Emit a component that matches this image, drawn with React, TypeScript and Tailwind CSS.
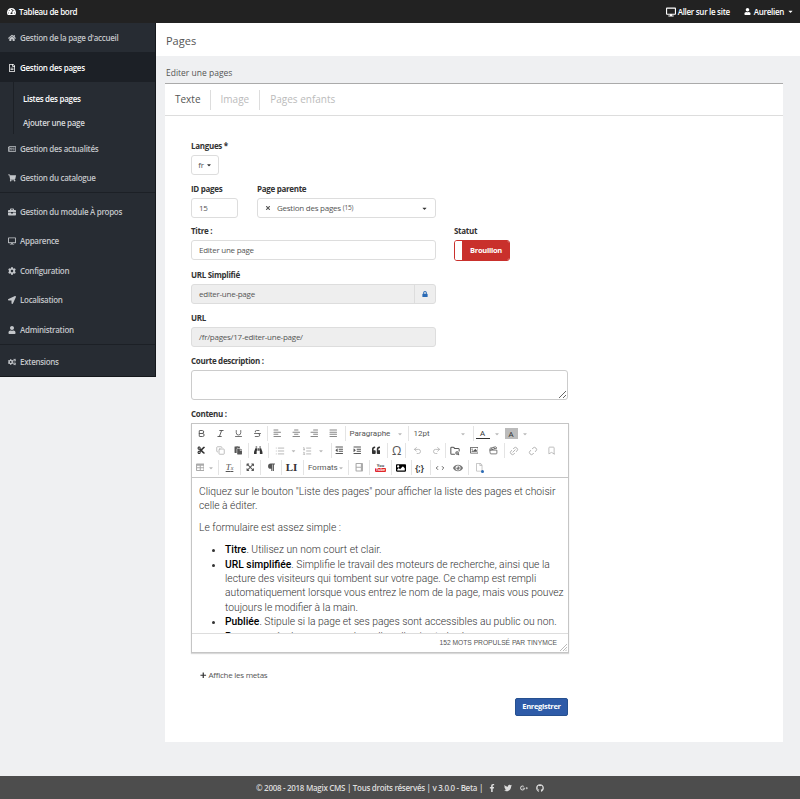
import type { ReactNode } from 'react'
import {
  FaTachometerAlt, FaHome, FaRegFileAlt, FaRegNewspaper, FaShoppingCart, FaBriefcase, FaDesktop, FaCog,
  FaLocationArrow, FaUser, FaCogs, FaCaretDown, FaLock, FaTimes, FaPlus, FaFacebookF, FaTwitter, FaGooglePlusG,
  FaGithub, FaAlignLeft, FaAlignCenter, FaAlignRight, FaAlignJustify, FaCut, FaPaste, FaBinoculars, FaOutdent,
  FaIndent, FaQuoteLeft, FaRegImage, FaTable, FaExpandArrowsAlt, FaParagraph, FaImage, FaEye, FaRegFile, FaColumns,
} from 'react-icons/fa'
import { Bold, Italic, Underline, Strikethrough, Copy, List, ListOrdered, Undo2, Redo2, FolderSearch, Clapperboard, Link2, Unlink2, Bookmark, ChevronLeft, ChevronRight } from 'lucide-react'

const menu = [
  { icon: <FaHome />, label: "Gestion de la page d'accueil", h: 'h-[29px]' },
  { icon: <FaRegFileAlt />, label: 'Gestion des pages', h: 'h-[30px] pt-[1px]', active: true },
]

const menu2 = [
  { icon: <FaRegNewspaper />, label: 'Gestion des actualités', h: 'h-[29px]' },
  { icon: <FaShoppingCart />, label: 'Gestion du catalogue', h: 'h-[30px]', border: true },
  { icon: <FaBriefcase />, label: 'Gestion du module À propos', h: 'h-[30px] mt-[3px] pt-[1px]' },
  { icon: <FaDesktop />, label: 'Apparence', h: 'h-[29px]' },
  { icon: <FaCog />, label: 'Configuration', h: 'h-[30px] pt-[1px]' },
  { icon: <FaLocationArrow />, label: 'Localisation', h: 'h-[29px]' },
  { icon: <FaUser />, label: 'Administration', h: 'h-[31px] pt-[1px]', border: true },
  { icon: <FaCogs />, label: 'Extensions', h: 'h-[31px] mt-[1px] pt-[1px]' },
]

function SideItem({ icon, label, h, active, border }: { icon: ReactNode; label: string; h: string; active?: boolean; border?: boolean }) {
  return (
    <div className={`${h} flex items-center gap-[4px] pl-[8px] text-[8px] tracking-[-0.3px] font-semibold ${active ? 'bg-[#1c2026] text-white' : 'text-[#c3c6ca]'} ${border ? 'border-b border-[#1c2026]' : ''}`}>
      <span className="text-[8px]">{icon}</span>
      {label}
    </div>
  )
}

function Tool({ children, w = 'w-[18.7px]', faded }: { children: ReactNode; w?: string; faded?: boolean }) {
  return <span className={`${w} flex justify-center items-center text-[8.5px] ${faded ? 'text-[#aaa]' : 'text-[#555]'}`}>{children}</span>
}

function Caret() {
  return <FaCaretDown className="text-[6px] text-[#bbb]" />
}

function Group({ children, last, pr = '' }: { children: ReactNode; last?: boolean; pr?: string }) {
  return <div className={`flex items-center h-[15px] ${pr} ${last ? '' : 'border-r border-[#e4e4e4]'}`}>{children}</div>
}

function Label({ children }: { children: ReactNode }) {
  return <label className="block text-[8px] tracking-[-0.3px] font-bold text-[#333] leading-[11px] mb-[4px]">{children}</label>
}

function Toolbar() {
  return (
    <div className="border-b border-[#c5c5c5] h-[54px] pt-[1px] tracking-normal">
      <div className="flex items-center h-[17px]">
        <Group>
          <Tool><Bold size={9} strokeWidth={2.5} /></Tool><Tool><Italic size={9} strokeWidth={2.5} /></Tool><Tool><Underline size={9} strokeWidth={2.2} /></Tool><Tool><Strikethrough size={9} strokeWidth={2.2} /></Tool>
        </Group>
        <Group pr="pr-[2px]">
          <Tool><FaAlignLeft className="text-[#888]" /></Tool><Tool><FaAlignCenter className="text-[#888]" /></Tool><Tool><FaAlignRight className="text-[#888]" /></Tool><Tool><FaAlignJustify className="text-[#888]" /></Tool>
        </Group>
        <Group>
          <div className="w-[62px] flex items-center justify-between pl-[4px] pr-[5px] text-[8px] text-[#555]" style={{ fontFamily: 'Roboto, sans-serif' }}>Paragraphe <Caret /></div>
        </Group>
        <Group>
          <div className="w-[64px] flex items-center justify-between pl-[5px] pr-[7px] text-[8px] text-[#555]" style={{ fontFamily: 'Roboto, sans-serif' }}>12pt <Caret /></div>
        </Group>
        <div className="flex items-center h-[15px] pl-[2px]">
          <span className="w-[14px] text-center text-[8px] text-[#333] border-b border-[#333] leading-[10px]">A</span>
          <span className="w-[15px] flex justify-center"><Caret /></span>
          <span className="w-[13px] text-center text-[8px] text-[#333] bg-[#bbb] leading-[11px]">A</span>
          <span className="w-[15px] flex justify-center"><Caret /></span>
        </div>
      </div>
      <div className="flex items-center h-[17px]">
        <Group><Tool><FaCut className="text-[#333]" /></Tool><Tool faded><Copy size={9} /></Tool><Tool><FaPaste /></Tool></Group>
        <Group><Tool w="w-[19px]"><FaBinoculars className="text-[#333]" /></Tool></Group>
        <Group pr="pr-[6px]">
          <Tool w="w-[22px]" faded><List size={10} /></Tool><Tool w="w-[5px]"><Caret /></Tool>
          <Tool w="w-[21px]" faded><ListOrdered size={10} /></Tool><Tool w="w-[8px]"><Caret /></Tool>
        </Group>
        <Group pr="pr-[3px]"><Tool w="w-[15px]"><FaOutdent /></Tool><Tool w="w-[21px]"><FaIndent /></Tool><Tool w="w-[16px]"><FaQuoteLeft className="text-[#333]" /></Tool></Group>
        <Group><Tool w="w-[17px]"><span className="text-[12px]">Ω</span></Tool></Group>
        <Group><Tool w="w-[22px]" faded><Undo2 size={9} /></Tool><Tool w="w-[17px]" faded><Redo2 size={9} /></Tool></Group>
        <Group pr="pr-[1px]"><Tool w="w-[18px]"><FolderSearch size={10} strokeWidth={2.5} /></Tool><Tool w="w-[20px]"><FaRegImage /></Tool><Tool w="w-[19px]"><Clapperboard size={9} /></Tool></Group>
        <Group last><Tool faded><Link2 size={10} className="-rotate-45" /></Tool><Tool faded><Unlink2 size={10} className="-rotate-45" /></Tool><Tool faded><Bookmark size={9} /></Tool></Group>
      </div>
      <div className="flex items-center h-[17px]">
        <Group pr="pr-[4px]"><Tool w="w-[16px]" faded><FaTable /></Tool><Tool w="w-[6px]"><Caret /></Tool></Group>
        <Group><Tool w="w-[21px]"><span className="italic underline text-[9px] leading-none" style={{ fontFamily: '"Liberation Serif", serif' }}>T<span className="text-[6px]">x</span></span></Tool></Group>
        <Group><Tool w="w-[19px]"><FaExpandArrowsAlt /></Tool></Group>
        <Group><Tool w="w-[20px]"><FaParagraph /></Tool></Group>
        <Group pr="pr-[2px]"><Tool w="w-[19px]"><span className="font-bold text-[11px] text-[#333]" style={{ fontFamily: '"Liberation Serif", serif' }}>LI</span></Tool></Group>
        <Group><div className="w-[44px] flex items-center justify-between pl-[4px] pr-[4px] text-[8px] text-[#555]" style={{ fontFamily: 'Roboto, sans-serif' }}>Formats <Caret /></div></Group>
        <Group><Tool w="w-[20px]" faded><FaColumns className="rotate-90" /></Tool></Group>
        <Group>
          <Tool w="w-[21px]">
            <span className="flex flex-col items-center leading-none" style={{ fontFamily: '"Liberation Sans", sans-serif' }}>
              <span className="text-[4px] text-[#333] font-bold">You</span>
              <span className="text-[4px] text-white bg-[#e0262b] rounded-[1px] px-[1px] font-bold">Tube</span>
            </span>
          </Tool>
        </Group>
        <Group pr="pr-[2px]"><Tool w="w-[17px]"><FaImage className="text-black text-[10px]" /></Tool></Group>
        <Group pr="pr-[3px]"><Tool w="w-[15px]"><span className="font-bold text-[8px] text-[#333]">{'{;}'}</span></Tool></Group>
        <Group>
          <Tool w="w-[17px]"><span className="flex text-[#333]"><ChevronLeft size={6} strokeWidth={3} /><ChevronRight size={6} strokeWidth={3} /></span></Tool>
          <Tool w="w-[20px]"><FaEye className="text-[#777] text-[10px]" /></Tool>
        </Group>
        <Group last>
          <Tool w="w-[20px]">
            <span className="relative flex">
              <FaRegFile className="text-[#bbb]" />
              <span className="absolute -right-[1px] -bottom-[1px] w-[3px] h-[3px] bg-[#2a6ab5] rounded-full"></span>
            </span>
          </Tool>
        </Group>
      </div>
    </div>
  )
}

export default function App() {
  return (
    <div className="min-h-[799px] flex flex-col bg-[#eff0f2] text-[#555]" style={{ fontFamily: '"Open Sans", sans-serif' }}>
      <header className="h-[23px] bg-[#222] flex items-center justify-between text-white text-[8px] tracking-[-0.3px] font-semibold pl-[7px] pr-[6px]">
        <div className="flex items-center gap-[3px]"><FaTachometerAlt className="text-[9px]" /> Tableau de bord</div>
        <div className="flex items-center gap-[14px]">
          <span className="flex items-center gap-[2px]"><FaDesktop className="text-[10px]" /> Aller sur le site</span>
          <span className="flex items-center gap-[3px]"><FaUser className="text-[7px]" /> Aurelien <FaCaretDown className="text-[7px]" /></span>
        </div>
      </header>

      <div className="flex-1 flex">
        <aside className="w-[156px] h-[354px] bg-[#272c33] border-r border-[#15181c] border-b shrink-0">
          {menu.map((m) => <SideItem key={m.label} {...m} />)}
          <div className="ml-[13px] border-l border-[#1c2026] h-[52px] pt-[5px] flex flex-col text-[8px] tracking-[-0.3px] font-semibold pl-[9px] text-[#d5d7da]">
            <span className="h-[24px] flex items-center text-white">Listes des pages</span>
            <span className="h-[23px] flex items-center">Ajouter une page</span>
          </div>
          {menu2.map((m) => <SideItem key={m.label} {...m} />)}
        </aside>

        <main className="flex-1 min-w-0">
          <div className="h-[33px] bg-white flex items-center pl-[10px] pt-[3px] text-[11px] text-[#555]">Pages</div>
          <div className="pl-[9px] pr-[17px] pt-[11px]">
            <h2 className="text-[8.5px] text-[#555] h-[17px] leading-[12px] border-b border-[#aaa] pl-[1px]">Editer une pages</h2>
            <div className="bg-white h-[658px]">
              <div className="h-[32px] border-b border-[#ddd] flex items-center text-[10px] pl-[1px]">
                <span className="px-[9px] h-[20px] flex items-center border-r border-[#ddd] text-[#555]">Texte</span>
                <span className="px-[10px] h-[20px] flex items-center border-r border-[#ddd] text-[#bbb]">Image</span>
                <span className="px-[10px] h-[20px] flex items-center text-[#bbb]">Pages enfants</span>
              </div>

              <div className="pl-[26px] pt-[24px] text-[8px] tracking-[-0.25px]">
                <Label>Langues *</Label>
                <div className="w-[28px] h-[20px] border border-[#ddd] rounded-[3px] flex items-center justify-center gap-[2px]">fr <FaCaretDown className="text-[6px] text-[#333]" /></div>

                <div className="flex gap-[19px] mt-[8px]">
                  <div className="w-[47px]">
                    <Label>ID pages</Label>
                    <div className="h-[20px] border border-[#ddd] rounded-[3px] flex items-center pl-[7px]">15</div>
                  </div>
                  <div className="w-[179px]">
                    <Label>Page parente</Label>
                    <div className="h-[20px] border border-[#ddd] rounded-[3px] flex items-center pl-[7px] pr-[7px]">
                      <FaTimes className="text-[6px] mr-[6px]" /> Gestion des pages <span className="text-[6.5px] ml-[2px]">(15)</span>
                      <FaCaretDown className="text-[7px] text-[#333] ml-auto" />
                    </div>
                  </div>
                </div>

                <div className="flex gap-[18px] mt-[7px]">
                  <div className="w-[245px]">
                    <Label>Titre :</Label>
                    <div className="h-[20px] border border-[#ddd] rounded-[3px] flex items-center pl-[7px]">Editer une page</div>
                  </div>
                  <div>
                    <Label>Statut</Label>
                    <div className="w-[56px] h-[21px] border border-[#c9302c] rounded-[3px] flex overflow-hidden">
                      <span className="w-[8px] bg-white border-r border-[#c9302c]"></span>
                      <span className="flex-1 bg-[#c9302c] text-white font-bold text-[7.5px] tracking-[-0.3px] flex items-center justify-center">Brouillon</span>
                    </div>
                  </div>
                </div>

                <div className="w-[245px] mt-[8px]">
                  <Label>URL Simplifié</Label>
                  <div className="h-[20px] border border-[#ddd] rounded-[3px] bg-[#eee] flex items-center pl-[7px]">
                    editer-une-page
                    <span className="ml-auto w-[21px] h-full border-l border-[#ddd] flex items-center justify-center text-[#2a6ab5]"><FaLock className="text-[6px]" /></span>
                  </div>
                </div>

                <div className="w-[245px] mt-[8px]">
                  <Label>URL</Label>
                  <div className="h-[20px] border border-[#ddd] rounded-[3px] bg-[#eee] flex items-center pl-[7px]">/fr/pages/17-editer-une-page/</div>
                </div>

                <div className="w-[377px] mt-[8px]">
                  <Label>Courte description :</Label>
                  <textarea className="block w-full h-[30px] border border-[#ccc] rounded-[3px]"></textarea>
                </div>

                <div className="w-[378px] mt-[8px]">
                  <Label>Contenu :</Label>
                  <div className="h-[230px] border border-[#c5c5c5] flex flex-col shadow-[0_1px_1px_rgba(0,0,0,0.15)]">
                    <Toolbar />
                    <div className="flex-1 overflow-hidden pl-[7px] pr-[4px] pt-[7px] text-[10.3px] tracking-normal leading-[14.4px] font-light text-[#333]" style={{ fontFamily: 'Roboto, sans-serif' }}>
                      <p className="mb-[7px]">Cliquez sur le bouton "Liste des pages" pour afficher la liste des pages et choisir celle à éditer.</p>
                      <p className="mb-[8px]">Le formulaire est assez simple :</p>
                      <ul className="list-disc pl-[26px]">
                        <li><strong className="font-medium text-black">Titre</strong>. Utilisez un nom court et clair.</li>
                        <li><strong className="font-medium text-black">URL simplifiée</strong>. Simplifie le travail des moteurs de recherche, ainsi que la lecture des visiteurs qui tombent sur votre page. Ce champ est rempli automatiquement lorsque vous entrez le nom de la page, mais vous pouvez toujours le modifier à la main.</li>
                        <li><strong className="font-medium text-black">Publiée</strong>. Stipule si la page et ses pages sont accessibles au public ou non.</li>
                        <li><strong className="font-medium text-black">Page parente</strong>. La page sous laquelle celle-ci est placée.</li>
                      </ul>
                    </div>
                    <div className="h-[19px] border-t border-[#ddd] flex items-center justify-end pr-[11px] text-[6.7px] tracking-normal text-[#555] relative" style={{ fontFamily: '"Liberation Sans", sans-serif' }}>
                      152 MOTS PROPULSÉ PAR TINYMCE
                      <svg className="absolute right-[1px] bottom-[1px]" width="7" height="7" viewBox="0 0 7 7">
                        <path d="M7 0 0 7M7 3 3 7M7 5.500 5.500 7" stroke="#bbb" strokeWidth="1" />
                      </svg>
                    </div>
                  </div>
                </div>

                <div className="flex items-center gap-[2px] mt-[16px] ml-[9px] h-[12px]"><FaPlus className="text-[6.500px] text-[#333]" /> Affiche les metas</div>
                <div className="w-[377px] flex justify-end mt-[17px]">
                  <button className="h-[18px] w-[53px] bg-[#2e5ba8] border border-[#26508f] rounded-[2px] text-white font-bold text-[7.5px] tracking-[-0.3px]">Enregistrer</button>
                </div>
              </div>
            </div>
          </div>
        </main>
      </div>

      <footer className="h-[23px] bg-[#4d4d4d] flex items-center justify-center gap-[5px] text-[#ddd] text-[8px] tracking-[-0.3px] font-semibold">
        <span>© 2008 - 2018 Magix CMS | Tous droits réservés | v 3.0.0 - Beta |</span>
        <span className="flex items-center gap-[8px] text-[8px]"><FaFacebookF /><FaTwitter /><FaGooglePlusG /><FaGithub /></span>
      </footer>
    </div>
  )
}
